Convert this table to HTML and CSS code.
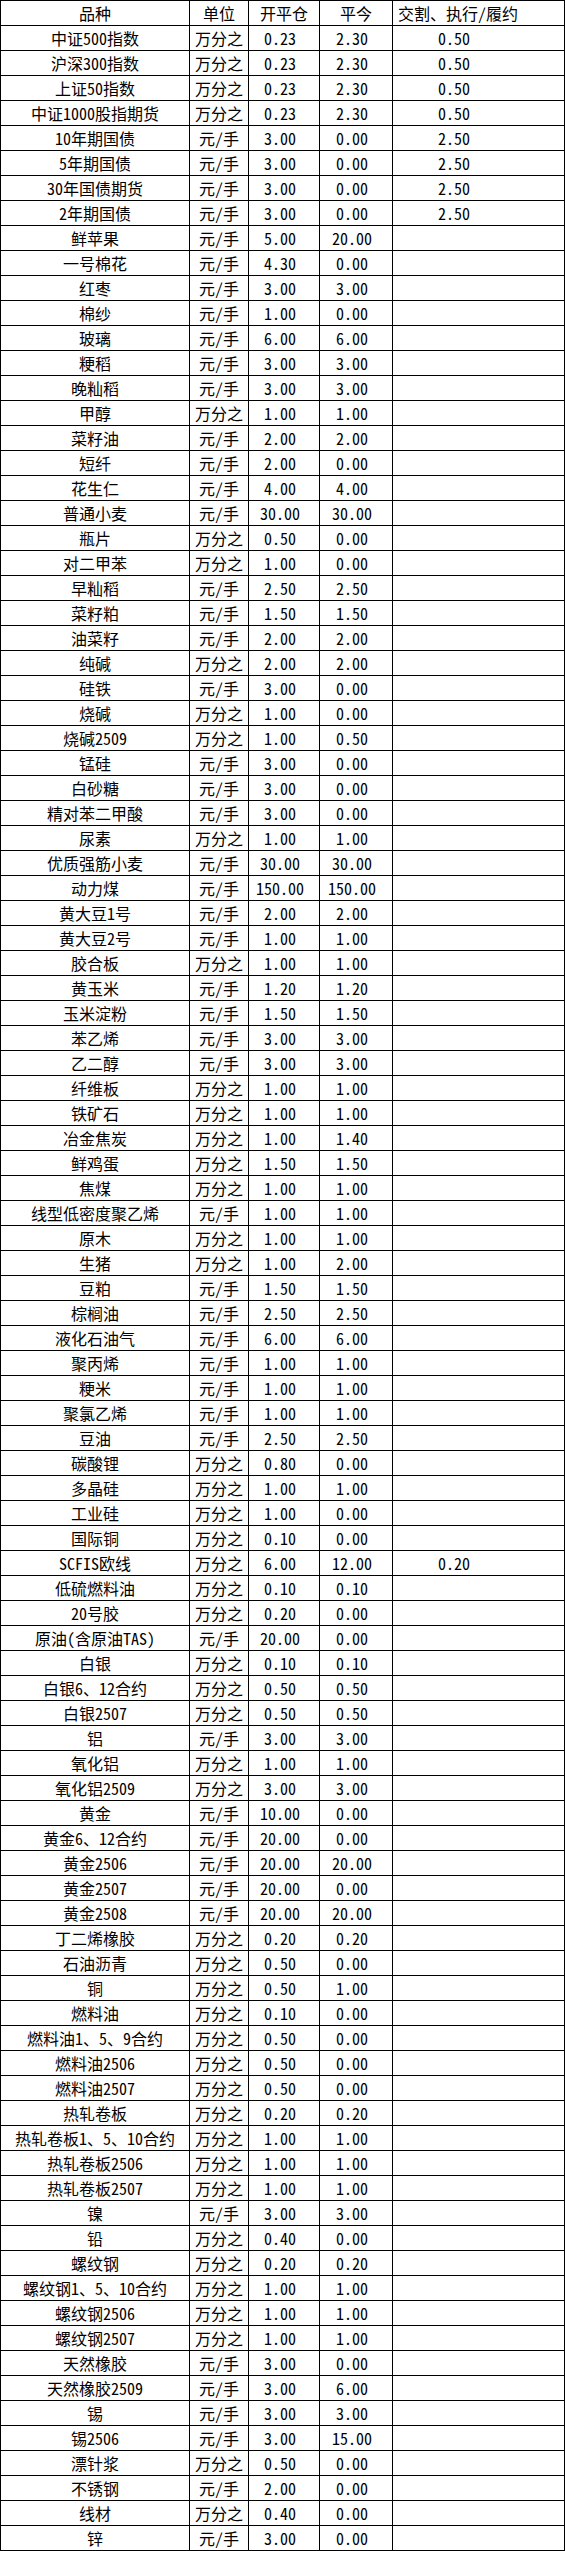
FILE: index.html
```html
<!DOCTYPE html>
<html lang="zh-CN">
<head>
<meta charset="utf-8">
<title>期货手续费</title>
<link rel="stylesheet" href="styles.css">
</head>
<body>
<table class="fees">
<thead>
<tr><th class="c1">品种</th><th class="c2">单位</th><th class="c3">开平仓</th><th class="c4">平今</th><th class="c5">交割、执行/履约</th></tr>
</thead>
<tbody>
<tr><td>中证500指数</td><td>万分之</td><td class="n">0.23</td><td class="n">2.30</td><td class="x n">0.50</td></tr>
<tr><td>沪深300指数</td><td>万分之</td><td class="n">0.23</td><td class="n">2.30</td><td class="x n">0.50</td></tr>
<tr><td>上证50指数</td><td>万分之</td><td class="n">0.23</td><td class="n">2.30</td><td class="x n">0.50</td></tr>
<tr><td>中证1000股指期货</td><td>万分之</td><td class="n">0.23</td><td class="n">2.30</td><td class="x n">0.50</td></tr>
<tr><td>10年期国债</td><td>元/手</td><td class="n">3.00</td><td class="n">0.00</td><td class="x n">2.50</td></tr>
<tr><td>5年期国债</td><td>元/手</td><td class="n">3.00</td><td class="n">0.00</td><td class="x n">2.50</td></tr>
<tr><td>30年国债期货</td><td>元/手</td><td class="n">3.00</td><td class="n">0.00</td><td class="x n">2.50</td></tr>
<tr><td>2年期国债</td><td>元/手</td><td class="n">3.00</td><td class="n">0.00</td><td class="x n">2.50</td></tr>
<tr><td>鲜苹果</td><td>元/手</td><td class="n">5.00</td><td class="n">20.00</td><td class="x"></td></tr>
<tr><td>一号棉花</td><td>元/手</td><td class="n">4.30</td><td class="n">0.00</td><td class="x"></td></tr>
<tr><td>红枣</td><td>元/手</td><td class="n">3.00</td><td class="n">3.00</td><td class="x"></td></tr>
<tr><td>棉纱</td><td>元/手</td><td class="n">1.00</td><td class="n">0.00</td><td class="x"></td></tr>
<tr><td>玻璃</td><td>元/手</td><td class="n">6.00</td><td class="n">6.00</td><td class="x"></td></tr>
<tr><td>粳稻</td><td>元/手</td><td class="n">3.00</td><td class="n">3.00</td><td class="x"></td></tr>
<tr><td>晚籼稻</td><td>元/手</td><td class="n">3.00</td><td class="n">3.00</td><td class="x"></td></tr>
<tr><td>甲醇</td><td>万分之</td><td class="n">1.00</td><td class="n">1.00</td><td class="x"></td></tr>
<tr><td>菜籽油</td><td>元/手</td><td class="n">2.00</td><td class="n">2.00</td><td class="x"></td></tr>
<tr><td>短纤</td><td>元/手</td><td class="n">2.00</td><td class="n">0.00</td><td class="x"></td></tr>
<tr><td>花生仁</td><td>元/手</td><td class="n">4.00</td><td class="n">4.00</td><td class="x"></td></tr>
<tr><td>普通小麦</td><td>元/手</td><td class="n">30.00</td><td class="n">30.00</td><td class="x"></td></tr>
<tr><td>瓶片</td><td>万分之</td><td class="n">0.50</td><td class="n">0.00</td><td class="x"></td></tr>
<tr><td>对二甲苯</td><td>万分之</td><td class="n">1.00</td><td class="n">0.00</td><td class="x"></td></tr>
<tr><td>早籼稻</td><td>元/手</td><td class="n">2.50</td><td class="n">2.50</td><td class="x"></td></tr>
<tr><td>菜籽粕</td><td>元/手</td><td class="n">1.50</td><td class="n">1.50</td><td class="x"></td></tr>
<tr><td>油菜籽</td><td>元/手</td><td class="n">2.00</td><td class="n">2.00</td><td class="x"></td></tr>
<tr><td>纯碱</td><td>万分之</td><td class="n">2.00</td><td class="n">2.00</td><td class="x"></td></tr>
<tr><td>硅铁</td><td>元/手</td><td class="n">3.00</td><td class="n">0.00</td><td class="x"></td></tr>
<tr><td>烧碱</td><td>万分之</td><td class="n">1.00</td><td class="n">0.00</td><td class="x"></td></tr>
<tr><td>烧碱2509</td><td>万分之</td><td class="n">1.00</td><td class="n">0.50</td><td class="x"></td></tr>
<tr><td>锰硅</td><td>元/手</td><td class="n">3.00</td><td class="n">0.00</td><td class="x"></td></tr>
<tr><td>白砂糖</td><td>元/手</td><td class="n">3.00</td><td class="n">0.00</td><td class="x"></td></tr>
<tr><td>精对苯二甲酸</td><td>元/手</td><td class="n">3.00</td><td class="n">0.00</td><td class="x"></td></tr>
<tr><td>尿素</td><td>万分之</td><td class="n">1.00</td><td class="n">1.00</td><td class="x"></td></tr>
<tr><td>优质强筋小麦</td><td>元/手</td><td class="n">30.00</td><td class="n">30.00</td><td class="x"></td></tr>
<tr><td>动力煤</td><td>元/手</td><td class="n">150.00</td><td class="n">150.00</td><td class="x"></td></tr>
<tr><td>黄大豆1号</td><td>元/手</td><td class="n">2.00</td><td class="n">2.00</td><td class="x"></td></tr>
<tr><td>黄大豆2号</td><td>元/手</td><td class="n">1.00</td><td class="n">1.00</td><td class="x"></td></tr>
<tr><td>胶合板</td><td>万分之</td><td class="n">1.00</td><td class="n">1.00</td><td class="x"></td></tr>
<tr><td>黄玉米</td><td>元/手</td><td class="n">1.20</td><td class="n">1.20</td><td class="x"></td></tr>
<tr><td>玉米淀粉</td><td>元/手</td><td class="n">1.50</td><td class="n">1.50</td><td class="x"></td></tr>
<tr><td>苯乙烯</td><td>元/手</td><td class="n">3.00</td><td class="n">3.00</td><td class="x"></td></tr>
<tr><td>乙二醇</td><td>元/手</td><td class="n">3.00</td><td class="n">3.00</td><td class="x"></td></tr>
<tr><td>纤维板</td><td>万分之</td><td class="n">1.00</td><td class="n">1.00</td><td class="x"></td></tr>
<tr><td>铁矿石</td><td>万分之</td><td class="n">1.00</td><td class="n">1.00</td><td class="x"></td></tr>
<tr><td>冶金焦炭</td><td>万分之</td><td class="n">1.00</td><td class="n">1.40</td><td class="x"></td></tr>
<tr><td>鲜鸡蛋</td><td>万分之</td><td class="n">1.50</td><td class="n">1.50</td><td class="x"></td></tr>
<tr><td>焦煤</td><td>万分之</td><td class="n">1.00</td><td class="n">1.00</td><td class="x"></td></tr>
<tr><td>线型低密度聚乙烯</td><td>元/手</td><td class="n">1.00</td><td class="n">1.00</td><td class="x"></td></tr>
<tr><td>原木</td><td>万分之</td><td class="n">1.00</td><td class="n">1.00</td><td class="x"></td></tr>
<tr><td>生猪</td><td>万分之</td><td class="n">1.00</td><td class="n">2.00</td><td class="x"></td></tr>
<tr><td>豆粕</td><td>元/手</td><td class="n">1.50</td><td class="n">1.50</td><td class="x"></td></tr>
<tr><td>棕榈油</td><td>元/手</td><td class="n">2.50</td><td class="n">2.50</td><td class="x"></td></tr>
<tr><td>液化石油气</td><td>元/手</td><td class="n">6.00</td><td class="n">6.00</td><td class="x"></td></tr>
<tr><td>聚丙烯</td><td>元/手</td><td class="n">1.00</td><td class="n">1.00</td><td class="x"></td></tr>
<tr><td>粳米</td><td>元/手</td><td class="n">1.00</td><td class="n">1.00</td><td class="x"></td></tr>
<tr><td>聚氯乙烯</td><td>元/手</td><td class="n">1.00</td><td class="n">1.00</td><td class="x"></td></tr>
<tr><td>豆油</td><td>元/手</td><td class="n">2.50</td><td class="n">2.50</td><td class="x"></td></tr>
<tr><td>碳酸锂</td><td>万分之</td><td class="n">0.80</td><td class="n">0.00</td><td class="x"></td></tr>
<tr><td>多晶硅</td><td>万分之</td><td class="n">1.00</td><td class="n">1.00</td><td class="x"></td></tr>
<tr><td>工业硅</td><td>万分之</td><td class="n">1.00</td><td class="n">0.00</td><td class="x"></td></tr>
<tr><td>国际铜</td><td>万分之</td><td class="n">0.10</td><td class="n">0.00</td><td class="x"></td></tr>
<tr><td>SCFIS欧线</td><td>万分之</td><td class="n">6.00</td><td class="n">12.00</td><td class="x n">0.20</td></tr>
<tr><td>低硫燃料油</td><td>万分之</td><td class="n">0.10</td><td class="n">0.10</td><td class="x"></td></tr>
<tr><td>20号胶</td><td>万分之</td><td class="n">0.20</td><td class="n">0.00</td><td class="x"></td></tr>
<tr><td>原油(含原油TAS)</td><td>元/手</td><td class="n">20.00</td><td class="n">0.00</td><td class="x"></td></tr>
<tr><td>白银</td><td>万分之</td><td class="n">0.10</td><td class="n">0.10</td><td class="x"></td></tr>
<tr><td>白银6、12合约</td><td>万分之</td><td class="n">0.50</td><td class="n">0.50</td><td class="x"></td></tr>
<tr><td>白银2507</td><td>万分之</td><td class="n">0.50</td><td class="n">0.50</td><td class="x"></td></tr>
<tr><td>铝</td><td>元/手</td><td class="n">3.00</td><td class="n">3.00</td><td class="x"></td></tr>
<tr><td>氧化铝</td><td>万分之</td><td class="n">1.00</td><td class="n">1.00</td><td class="x"></td></tr>
<tr><td>氧化铝2509</td><td>万分之</td><td class="n">3.00</td><td class="n">3.00</td><td class="x"></td></tr>
<tr><td>黄金</td><td>元/手</td><td class="n">10.00</td><td class="n">0.00</td><td class="x"></td></tr>
<tr><td>黄金6、12合约</td><td>元/手</td><td class="n">20.00</td><td class="n">0.00</td><td class="x"></td></tr>
<tr><td>黄金2506</td><td>元/手</td><td class="n">20.00</td><td class="n">20.00</td><td class="x"></td></tr>
<tr><td>黄金2507</td><td>元/手</td><td class="n">20.00</td><td class="n">0.00</td><td class="x"></td></tr>
<tr><td>黄金2508</td><td>元/手</td><td class="n">20.00</td><td class="n">20.00</td><td class="x"></td></tr>
<tr><td>丁二烯橡胶</td><td>万分之</td><td class="n">0.20</td><td class="n">0.20</td><td class="x"></td></tr>
<tr><td>石油沥青</td><td>万分之</td><td class="n">0.50</td><td class="n">0.00</td><td class="x"></td></tr>
<tr><td>铜</td><td>万分之</td><td class="n">0.50</td><td class="n">1.00</td><td class="x"></td></tr>
<tr><td>燃料油</td><td>万分之</td><td class="n">0.10</td><td class="n">0.00</td><td class="x"></td></tr>
<tr><td>燃料油1、5、9合约</td><td>万分之</td><td class="n">0.50</td><td class="n">0.00</td><td class="x"></td></tr>
<tr><td>燃料油2506</td><td>万分之</td><td class="n">0.50</td><td class="n">0.00</td><td class="x"></td></tr>
<tr><td>燃料油2507</td><td>万分之</td><td class="n">0.50</td><td class="n">0.00</td><td class="x"></td></tr>
<tr><td>热轧卷板</td><td>万分之</td><td class="n">0.20</td><td class="n">0.20</td><td class="x"></td></tr>
<tr><td>热轧卷板1、5、10合约</td><td>万分之</td><td class="n">1.00</td><td class="n">1.00</td><td class="x"></td></tr>
<tr><td>热轧卷板2506</td><td>万分之</td><td class="n">1.00</td><td class="n">1.00</td><td class="x"></td></tr>
<tr><td>热轧卷板2507</td><td>万分之</td><td class="n">1.00</td><td class="n">1.00</td><td class="x"></td></tr>
<tr><td>镍</td><td>元/手</td><td class="n">3.00</td><td class="n">3.00</td><td class="x"></td></tr>
<tr><td>铅</td><td>万分之</td><td class="n">0.40</td><td class="n">0.00</td><td class="x"></td></tr>
<tr><td>螺纹钢</td><td>万分之</td><td class="n">0.20</td><td class="n">0.20</td><td class="x"></td></tr>
<tr><td>螺纹钢1、5、10合约</td><td>万分之</td><td class="n">1.00</td><td class="n">1.00</td><td class="x"></td></tr>
<tr><td>螺纹钢2506</td><td>万分之</td><td class="n">1.00</td><td class="n">1.00</td><td class="x"></td></tr>
<tr><td>螺纹钢2507</td><td>万分之</td><td class="n">1.00</td><td class="n">1.00</td><td class="x"></td></tr>
<tr><td>天然橡胶</td><td>元/手</td><td class="n">3.00</td><td class="n">0.00</td><td class="x"></td></tr>
<tr><td>天然橡胶2509</td><td>元/手</td><td class="n">3.00</td><td class="n">6.00</td><td class="x"></td></tr>
<tr><td>锡</td><td>元/手</td><td class="n">3.00</td><td class="n">3.00</td><td class="x"></td></tr>
<tr><td>锡2506</td><td>元/手</td><td class="n">3.00</td><td class="n">15.00</td><td class="x"></td></tr>
<tr><td>漂针浆</td><td>万分之</td><td class="n">0.50</td><td class="n">0.00</td><td class="x"></td></tr>
<tr><td>不锈钢</td><td>元/手</td><td class="n">2.00</td><td class="n">0.00</td><td class="x"></td></tr>
<tr><td>线材</td><td>万分之</td><td class="n">0.40</td><td class="n">0.00</td><td class="x"></td></tr>
<tr><td>锌</td><td>元/手</td><td class="n">3.00</td><td class="n">0.00</td><td class="x"></td></tr>
</tbody>
</table>
</body>
</html>
```

FILE: styles.css
```css
html, body {
  margin: 0;
  padding: 0;
  background: #ffffff;
}

.fees {
  border-collapse: separate;
  border-spacing: 0;
  table-layout: fixed;
  width: 565px;
  border-top: 1px solid #000;
  border-left: 1px solid #000;
  font-family: "Noto Sans Mono CJK SC", "Noto Sans CJK SC", "Liberation Mono", monospace;
  font-size: 16px;
  color: #000;
}

.fees th,
.fees td {
  box-sizing: border-box;
  height: 25px;
  padding: 0;
  line-height: 24px;
  font-weight: normal;
  text-align: center;
  white-space: nowrap;
  border-right: 1px solid #000;
  border-bottom: 1px solid #000;
  overflow: hidden;
}

.fees .c1 { width: 189px; }
.fees .c2 { width: 59px; }
.fees .c3 { width: 71px; }
.fees .c4 { width: 73px; }
.fees .c5 { width: 172px; padding-right: 41px; }

.fees td.n { padding-right: 8px; }
.fees td.x { padding-right: 41px; }
.fees td.x.n { padding-right: 49px; }
```
